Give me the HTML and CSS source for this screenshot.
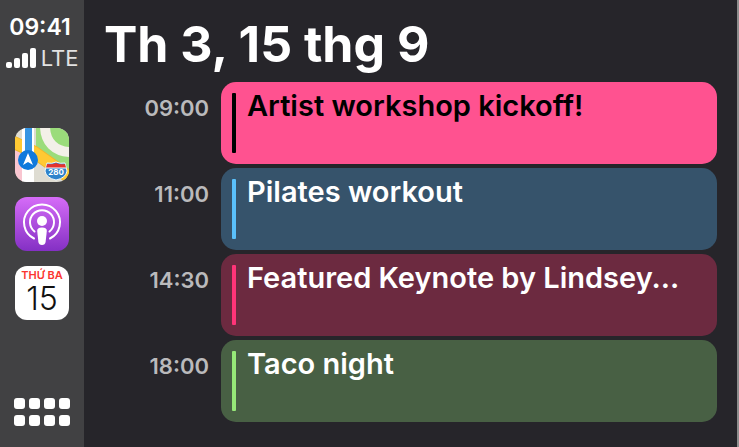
FILE: index.html
```html
<!DOCTYPE html>
<html lang="vi">
<head>
    <meta charset="UTF-8">
    <meta name="viewport" content="width=device-width, initial-scale=1.0">
    <title>CarPlay - Calendar</title>
    <link rel="stylesheet" href="styles.css">
</head>
<body>
    <aside class="sidebar">
        <div class="status">
            <time class="clock">09:41</time>
            <div class="network">
                <svg class="signal" viewBox="0 0 30 20" aria-hidden="true">
                    <rect x="0" y="14" width="6" height="6" rx="2"/>
                    <rect x="8" y="10" width="6" height="10" rx="2"/>
                    <rect x="16" y="5" width="6" height="15" rx="2"/>
                    <rect x="24" y="0" width="6" height="20" rx="2"/>
                </svg>
                <span>LTE</span>
            </div>
        </div>
        <nav class="apps">
            <a href="#maps" class="app" aria-label="Maps">
                <svg viewBox="0 0 54 54">
                    <rect width="54" height="54" fill="#dedcd2"/>
                    <path d="M21 0H54V48L21 24Z" fill="#9bdc7b"/>
                    <path d="M30 -2C30 14 40 24 56 24" fill="none" stroke="#f3f0e8" stroke-width="10"/>
                    <path d="M0 20l8 4v30H0z" fill="#f9c5d0"/>
                    <path d="M-2 14L19 24L54 49" fill="none" stroke="#f0b72b" stroke-width="13"/>
                    <path d="M-2 14L19 24L54 49" fill="none" stroke="#ffc933" stroke-width="11"/>
                    <rect x="7" y="0" width="12" height="54" fill="#fff"/>
                    <rect x="10" y="0" width="7" height="32" fill="#3695e3"/>
                    <circle cx="13" cy="32" r="10" fill="#0f79dc"/>
                    <path d="M13 25l5 12-5-3-5 3z" fill="#fff"/>
                    <path d="M32 35q5 1 9-1 4 2 9 1l2 8q-1 7-11 9-10-2-11-9z" fill="#2f83cb" stroke="#eef6fb" stroke-width="1"/>
                    <path d="M32 36q5 1 9-1 4 2 9 1l1 4H31z" fill="#e5332e"/>
                    <path d="M31 40h20" stroke="#fff" stroke-width="1"/>
                    <text x="41" y="47" class="shield">280</text>
                </svg>
            </a>
            <a href="#podcasts" class="app" aria-label="Podcasts">
                <svg viewBox="0 0 54 54">
                    <defs>
                        <linearGradient id="podcasts" x2="0" y2="1">
                            <stop offset="0" stop-color="#d66cf8"/>
                            <stop offset="1" stop-color="#8430c4"/>
                        </linearGradient>
                    </defs>
                    <rect width="54" height="54" fill="url(#podcasts)"/>
                    <g fill="none" stroke="#fff" stroke-width="2" stroke-linecap="round">
                        <path d="M19 41.500A18 18 0 1 1 35 41.500"/>
                        <path d="M19.500 34.500A12 12 0 1 1 34.500 34.500"/>
                    </g>
                    <circle cx="27" cy="24" r="5" fill="#fff"/>
                    <path d="M27 30.500c3.500 0 5 1.300 4.800 3.500l-1.200 11c-.3 2-1.500 3-3.600 3s-3.300-1-3.600-3l-1.200-11c-.2-2.200 1.300-3.500 4.800-3.500z" fill="#fff"/>
                </svg>
            </a>
            <a href="#calendar" class="app calendar">
                <span class="weekday">THỨ BA</span>
                <span class="day">15</span>
            </a>
        </nav>
        <button class="dashboard-btn" aria-label="Dashboard">
            <svg viewBox="0 0 56 28">
                <rect x="0" y="0" width="11" height="11" rx="3"/>
                <rect x="15" y="0" width="11" height="11" rx="3"/>
                <rect x="30" y="0" width="11" height="11" rx="3"/>
                <rect x="45" y="0" width="11" height="11" rx="3"/>
                <rect x="0" y="17" width="11" height="11" rx="3"/>
                <rect x="15" y="17" width="11" height="11" rx="3"/>
                <rect x="30" y="17" width="11" height="11" rx="3"/>
                <rect x="45" y="17" width="11" height="11" rx="3"/>
            </svg>
        </button>
    </aside>
    <main class="agenda">
        <h1>Th 3, 15 thg 9</h1>
        <ul class="events">
            <li>
                <time>09:00</time>
                <div class="event pink"><span class="title">Artist workshop kickoff!</span></div>
            </li>
            <li>
                <time>11:00</time>
                <div class="event blue"><span class="title">Pilates workout</span></div>
            </li>
            <li>
                <time>14:30</time>
                <div class="event maroon"><span class="title">Featured Keynote by Lindsey...</span></div>
            </li>
            <li>
                <time>18:00</time>
                <div class="event green"><span class="title">Taco night</span></div>
            </li>
        </ul>
    </main>
</body>
</html>
```
FILE: styles.css
```css
* { box-sizing: border-box; }
body { margin: 0; min-height: 100vh; display: flex; background: #26252a; color: #fff; font-family: Inter, "Liberation Sans", sans-serif; border-right: 2px solid #8e8e8e; }

/* Sidebar */
.sidebar { width: 84px; flex-shrink: 0; display: flex; flex-direction: column; align-items: center; padding: 12px 0 21px; background: #414143; }
.status { display: flex; flex-direction: column; align-items: center; }
.clock { font-size: 23px; line-height: 30px; font-weight: 600; margin-right: 4px; }
.network { display: flex; align-items: center; gap: 5px; font-size: 22px; line-height: 32px; color: #e2e2e2; }
.signal { width: 30px; height: 20px; fill: #fff; }
.apps { display: flex; flex-direction: column; gap: 15px; margin-top: 54px; }
.app { display: block; width: 54px; height: 54px; border-radius: 12px; overflow: hidden; text-decoration: none; }
.app svg { display: block; width: 100%; height: 100%; }
.shield { font-size: 8px; font-weight: 700; fill: #fff; text-anchor: middle; }
.calendar { display: flex; flex-direction: column; align-items: center; background: #fff; padding-top: 3px; }
.weekday { font-size: 11px; line-height: 12px; font-weight: 600; color: #fb3530; }
.day { font-size: 32px; line-height: 36px; font-weight: 300; color: #111; }
.dashboard-btn { margin-top: auto; padding: 0; border: none; background: none; cursor: pointer; }
.dashboard-btn svg { display: block; width: 56px; height: 28px; fill: #fff; }

/* Agenda */
.agenda { flex: 1; min-width: 0; padding: 14px 20px 24px; }
h1 { margin: 0; font-size: 50px; line-height: 60px; font-weight: 700; }
.events { list-style: none; margin: 8px 0 0; padding: 0; display: flex; flex-direction: column; gap: 4px; }
.events li { display: flex; gap: 12px; }
.events time { width: 105px; padding-top: 10px; text-align: right; font-size: 22px; line-height: 32px; font-weight: 600; color: #bababc; }
.event { flex: 1; min-width: 0; height: 82px; display: flex; gap: 11px; padding: 4px 11px; border-radius: 15px; }
.event::before { content: ""; flex-shrink: 0; width: 4px; margin: 7px 0; border-radius: 1px; background: currentColor; }
.title { font-size: 29px; line-height: 40px; font-weight: 600; color: #fff; white-space: nowrap; overflow: hidden; text-overflow: ellipsis; }
.pink { background: #ff5290; color: #000; }
.pink .title { color: #000; }
.blue { background: #36536b; color: #5ac0fa; }
.maroon { background: #6c2a40; color: #ff3478; }
.green { background: #486044; color: #96e878; }
```
